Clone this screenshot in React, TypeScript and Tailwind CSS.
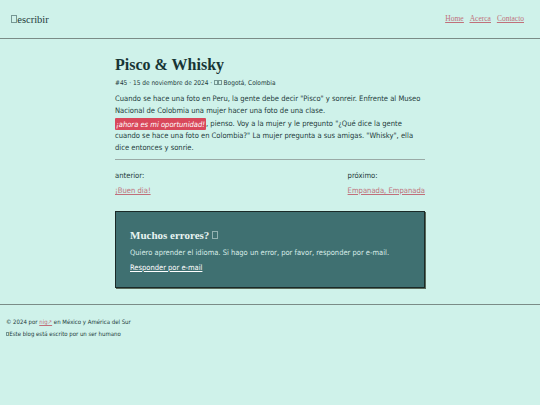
const sans = "font-['DejaVu_Sans_Condensed','DejaVu_Sans',sans-serif]";
const serif = "font-['Liberation_Serif','Times_New_Roman',serif]";

function Tofu({ className = "" }: { className?: string }) {
  return (
    <span
      className={`inline-block h-[0.72em] w-[0.55em] border-[0.5px] border-current align-[-0.02em] opacity-50 ${className}`}
    />
  );
}

export default function App() {
  return (
    <div className={`min-h-[405px] w-full bg-[#cff2ea] text-[#1e3b3b] ${sans}`}>
      <header className="flex h-[39px] items-center justify-between border-b-[1.5px] border-[#7b8c87] px-[11px]">
        <a className={`${serif} pt-[1px] text-[10.5px] text-[#1e3b3b]`}>
          <Tofu className="mr-[0.5px]" />escribir
        </a>
        <nav className={`${serif} flex gap-[6px] pr-[5px] text-[7.5px] text-[#c0707a] underline`}>
          <a>Home</a>
          <a>Acerca</a>
          <a>Contacto</a>
        </nav>
      </header>

      <main className="mx-auto w-[310px] pt-[15px]">
        <h1 className={`${serif} text-[16px] leading-[22px] font-bold text-[#173535]`}>Pisco &amp; Whisky</h1>
        <p className="mt-[2px] text-[6.5px] leading-[10px]">
          #45 · 15 de noviembre de 2024 · <Tofu /><Tofu className="ml-[0.5px]" /> Bogotá, Colombia
        </p>
        <p className="mt-[5px] text-[7.55px] leading-[12px]">
          Cuando se hace una foto en Peru, la gente debe decir "Pisco" y sonreir. Enfrente al Museo Nacional de Colobmia una mujer hacer una foto de una clase.
        </p>
        <p className="mt-[1px] text-[7.55px] leading-[12px]">
          <em className="rounded-[1px] bg-[#d9485b] px-[1px] py-[1.5px] text-white">¡ahora es mi oportunidad!</em>, pienso. Voy a la mujer y le pregunto "¿Qué dice la gente cuando se hace una foto en Colombia?" La mujer pregunta a sus amigas. "Whisky", ella dice entonces y sonrie.
        </p>
        <hr className="mt-[5px] border-t border-[#9aaaa6]" />

        <div className="mt-[8px] flex justify-between text-[7.6px] leading-[15px]">
          <div>
            <div>anterior:</div>
            <a className="text-[#c0707a] underline">¡Buen dia!</a>
          </div>
          <div>
            <div>próximo:</div>
            <a className="text-[#c0707a] underline">Empanada, Empanada</a>
          </div>
        </div>

        <section className="mt-[13px] border border-[#1a2a28] bg-[#3f7071] px-[14px] pt-[16px] pb-[13px] text-[#d8ece8] shadow-[1px_1px_0_#5a6a5a]">
          <h2 className={`${serif} text-[11px] font-bold leading-[14px] text-[#e8f4f2]`}>
            Muchos errores? <Tofu />
          </h2>
          <p className="mt-[5px] text-[7.5px] leading-[12px]">Quiero aprender el idioma. Si hago un error, por favor, responder por e-mail.</p>
          <a className="mt-[3px] block text-[7.5px] leading-[12px] text-white underline">Responder por e-mail</a>
        </section>
      </main>

      <footer className="mt-[16px] border-t-[1.5px] border-[#7b8c87] px-[6px] pt-[11px] text-[6px] leading-[12px]">
        <p>© 2024 por <a className="text-[#c0707a] underline">nig↗</a> en México y América del Sur</p>
        <p><Tofu />Este blog está escrito por un ser humano</p>
      </footer>
    </div>
  );
}
